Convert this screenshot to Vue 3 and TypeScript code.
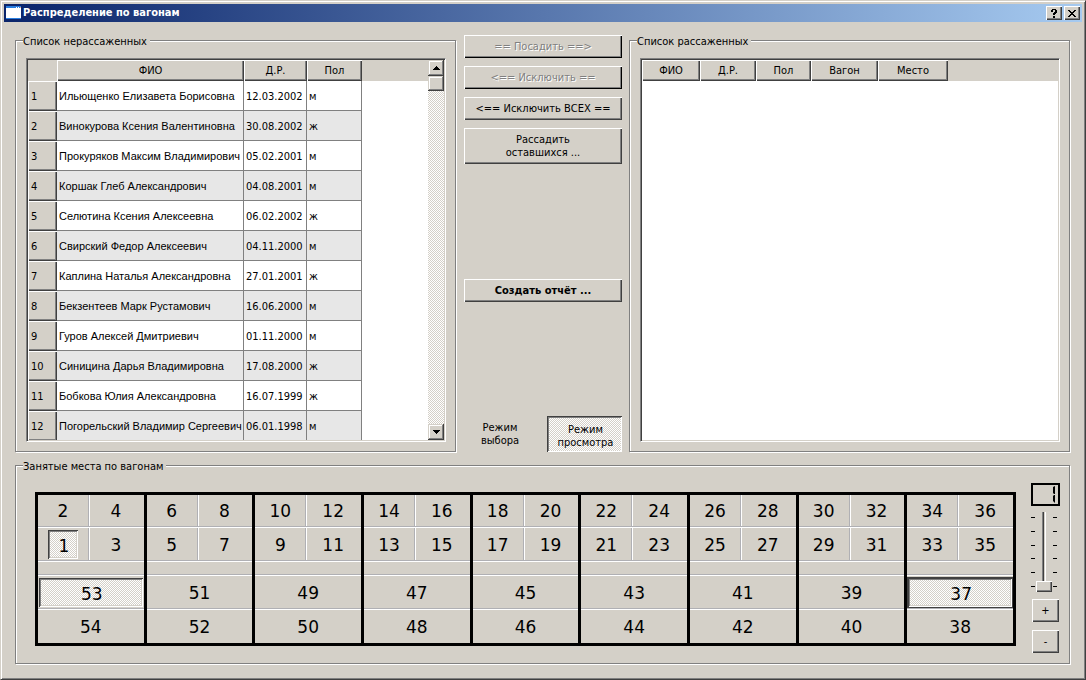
<script setup lang="ts">
import { ref, computed } from 'vue'

interface Passenger {
  name: string
  born: string
  sex: string
}

const passengers: Passenger[] = [
  { name: 'Ильющенко Елизавета Борисовна', born: '12.03.2002', sex: 'м' },
  { name: 'Винокурова Ксения Валентиновна', born: '30.08.2002', sex: 'ж' },
  { name: 'Прокуряков Максим Владимирович', born: '05.02.2001', sex: 'м' },
  { name: 'Коршак Глеб Александрович', born: '04.08.2001', sex: 'м' },
  { name: 'Селютина Ксения Алексеевна', born: '06.02.2002', sex: 'ж' },
  { name: 'Свирский Федор Алексеевич', born: '04.11.2000', sex: 'м' },
  { name: 'Каплина Наталья Александровна', born: '27.01.2001', sex: 'ж' },
  { name: 'Бекзентеев Марк Рустамович', born: '16.06.2000', sex: 'м' },
  { name: 'Гуров Алексей Дмитриевич', born: '01.11.2000', sex: 'м' },
  { name: 'Синицина Дарья Владимировна', born: '17.08.2000', sex: 'ж' },
  { name: 'Бобкова Юлия Александровна', born: '16.07.1999', sex: 'ж' },
  { name: 'Погорельский Владимир Сергеевич', born: '06.01.1998', sex: 'м' },
]

const mode = ref<'select' | 'view'>('view')
const car = ref(1)
const taken = new Set([1, 53])
const current = ref(37)

const compartments = computed(() =>
  Array.from({ length: 9 }, (_, i) => ({
    upper: [4 * i + 2, 4 * i + 4],
    lower: [4 * i + 1, 4 * i + 3],
    side: [53 - 2 * i, 54 - 2 * i],
  })),
)

const ticks = [5, 19, 33, 46, 60, 74]

const seatClass = (n: number) => ({ down: taken.has(n), current: n === current.value })
</script>

<template>
  <div class="window">
    <header class="titlebar">
      <svg class="app-icon" width="16" height="14" viewBox="0 0 16 14" aria-hidden="true" shape-rendering="crispEdges">
        <rect width="15" height="13" fill="#2a7fe0" />
        <rect x="10" y="1" width="1" height="1" fill="#fff" />
        <rect x="12" y="1" width="1" height="1" fill="#fff" />
        <rect x="14" y="1" width="1" height="1" fill="#f0a080" />
        <rect y="2" width="15" height="10" fill="#fff" />
      </svg>
      <h1>Распределение по вагонам</h1>
      <button class="caption" aria-label="Справка">
        <svg width="8" height="9" viewBox="0 0 8 9" shape-rendering="crispEdges">
          <path d="M2 0h4v1h1v3h-1v1h-1v1h-2v-2h1v-1h1v-2h-2v2h-2v-2h1zM3 7h2v2h-2z" />
        </svg>
      </button>
      <button class="caption" aria-label="Закрыть">
        <svg width="8" height="7" viewBox="0 0 8 7" shape-rendering="crispEdges">
          <path d="M0 0h2v1h1v1h2v-1h1v-1h2v1h-1v1h-1v1h-1v1h1v1h1v1h1v1h-2v-1h-1v-1h-2v1h-1v1h-2v-1h1v-1h1v-1h1v-1h-1v-1h-1v-1h-1z" />
        </svg>
      </button>
    </header>

    <main>
      <div class="top">
        <fieldset class="group">
          <legend>Список нерассаженных</legend>
          <div class="sunken">
            <div class="viewport">
              <table class="people">
                <colgroup>
                  <col class="c-num" /><col class="c-name" /><col class="c-date" /><col class="c-sex" /><col />
                </colgroup>
                <thead>
                  <tr>
                    <td class="blank"></td>
                    <th scope="col">ФИО</th>
                    <th scope="col">Д.Р.</th>
                    <th scope="col">Пол</th>
                    <td class="blank"></td>
                  </tr>
                </thead>
                <tbody>
                  <tr v-for="(p, i) in passengers" :key="p.name">
                    <th scope="row">{{ i + 1 }}</th>
                    <td class="name">{{ p.name }}</td>
                    <td>{{ p.born }}</td>
                    <td>{{ p.sex }}</td>
                    <td class="rest"></td>
                  </tr>
                </tbody>
              </table>
            </div>
            <div class="scrollbar">
              <button aria-label="Вверх">
                <svg width="7" height="4" viewBox="0 0 7 4" shape-rendering="crispEdges"><path d="M3 0h1v1h1v1h1v1h1v1h-7v-1h1v-1h1v-1h1z" /></svg>
              </button>
              <div class="thumb"></div>
              <button class="last" aria-label="Вниз">
                <svg width="7" height="4" viewBox="0 0 7 4" shape-rendering="crispEdges"><path d="M0 0h7v1h-1v1h-1v1h-1v1h-1v-1h-1v-1h-1v-1h-1z" /></svg>
              </button>
            </div>
          </div>
        </fieldset>

        <div class="actions">
          <button class="push framed" disabled>== Посадить ==&gt;</button>
          <button class="push framed" disabled>&lt;== Исключить ==</button>
          <button class="push">&lt;== Исключить ВСЕХ ==</button>
          <button class="push">Рассадить<br />оставшихся ...</button>
          <button class="push report">Создать отчёт ...</button>
          <div class="modes">
            <button :class="{ on: mode === 'select' }" :aria-pressed="mode === 'select'" @click="mode = 'select'">Режим<br />выбора</button>
            <button :class="{ on: mode === 'view' }" :aria-pressed="mode === 'view'" @click="mode = 'view'">Режим<br />просмотра</button>
          </div>
        </div>

        <fieldset class="group">
          <legend>Список рассаженных</legend>
          <div class="sunken">
            <div class="viewport">
              <table class="seated">
                <colgroup>
                  <col class="s-name" /><col class="s-date" /><col class="s-sex" /><col class="s-car" /><col class="s-seat" /><col />
                </colgroup>
                <thead>
                  <tr>
                    <th scope="col">ФИО</th>
                    <th scope="col">Д.Р.</th>
                    <th scope="col">Пол</th>
                    <th scope="col">Вагон</th>
                    <th scope="col">Место</th>
                    <td class="blank"></td>
                  </tr>
                </thead>
              </table>
            </div>
          </div>
        </fieldset>
      </div>

      <fieldset class="group plan">
        <legend>Занятые места по вагонам</legend>
        <div class="plan-body">
          <div class="carriage">
            <div v-for="c in compartments" :key="c.side[0]" class="compartment">
              <div class="pair first">
                <button v-for="n in c.upper" :key="n" :class="seatClass(n)" @click="current = n">{{ n }}</button>
              </div>
              <div class="pair">
                <button v-for="n in c.lower" :key="n" :class="seatClass(n)" @click="current = n">{{ n }}</button>
              </div>
              <div class="aisle"></div>
              <div v-for="n in c.side" :key="n" class="side">
                <button :class="seatClass(n)" @click="current = n">{{ n }}</button>
              </div>
            </div>
          </div>
          <div class="picker">
            <output class="lcd" :aria-label="String(car)">
              <svg width="25" height="19" viewBox="0 0 25 19" aria-hidden="true">
                <path d="M22 1v8h-1l-1 -1v-6zM22 10v8l-2 -2v-5l1 -1z" />
              </svg>
            </output>
            <div class="slider">
              <svg width="26" height="80" viewBox="0 0 26 80" aria-hidden="true" shape-rendering="crispEdges">
                <path v-for="t in ticks" :key="t" :d="`M0 ${t}h4v1h-4zM22 ${t}h4v1h-4z`" />
              </svg>
              <input v-model.number="car" type="range" min="1" max="6" aria-label="Вагон" />
            </div>
            <button class="push step" @click="car = Math.min(6, car + 1)">+</button>
            <button class="push step" @click="car = Math.max(1, car - 1)">-</button>
          </div>
        </div>
      </fieldset>
    </main>
  </div>
</template>

<style>
body {
  margin: 0;
  background: #d4d0c8;
}
</style>

<style scoped>
* {
  box-sizing: border-box;
}
.window {
  --face: #d4d0c8;
  --shade: #808080;
  --dark: #404040;
  --dither: repeating-conic-gradient(#fff 0 25%, #d4d0c8 0 50%) 0 0 / 2px 2px;
  min-height: 100vh;
  display: flex;
  flex-direction: column;
  padding: 3px;
  background: var(--face);
  border: 1px solid;
  border-color: var(--face) var(--dark) var(--dark) var(--face);
  box-shadow: inset 1px 1px #fff, inset -1px -1px var(--shade);
  color: #000;
  font: 11px/13px "DejaVu Sans Condensed", "DejaVu Sans", sans-serif;
}
button {
  font: inherit;
  color: inherit;
  padding: 0;
  margin: 0;
  border: 0;
  border-radius: 0;
  background: none;
}
.titlebar {
  height: 18px;
  display: flex;
  align-items: center;
  padding: 0 2px;
  background: linear-gradient(90deg, #0a246a, #a6caf0);
}
.titlebar h1 {
  flex: 1;
  margin: 0 0 0 1px;
  color: #fff;
  font-size: 11px;
  line-height: 18px;
  font-weight: bold;
}
.caption {
  width: 16px;
  height: 14px;
  display: flex;
  align-items: center;
  justify-content: center;
  background: var(--face);
  box-shadow: inset 1px 1px #fff, inset -1px -1px var(--dark), inset -2px -2px var(--shade);
}
.caption + .caption {
  margin-left: 2px;
}
main {
  flex: 1;
  display: flex;
  flex-direction: column;
  gap: 7px;
  padding: 13px 11px 11px;
}
.top {
  flex: 1 0 417px;
  display: flex;
  gap: 7px;
}
.group {
  position: relative;
  flex: 1 1 0;
  min-width: 0;
  margin: 0;
  display: flex;
  flex-direction: column;
  border: 0;
  padding: 23px 11px 11px;
}
.group::before {
  content: "";
  position: absolute;
  inset: 5px 1px 1px 0;
  border: 1px solid var(--shade);
  box-shadow: 1px 1px #fff, inset 1px 1px #fff;
  pointer-events: none;
}
.group legend {
  position: absolute;
  top: 0;
  left: 8px;
  padding: 0 3px 0 0;
  background: var(--face);
}
.sunken {
  flex: 1 1 0;
  min-height: 0;
  display: flex;
  overflow: hidden;
  background: #fff;
  border: 1px solid;
  border-color: var(--shade) #fff #fff var(--shade);
  box-shadow: inset 1px 1px var(--dark), inset -1px -1px var(--face);
  padding: 1px;
}
.viewport {
  flex: 1;
  min-width: 0;
  overflow: hidden;
}
table {
  width: 100%;
  table-layout: fixed;
  border-collapse: separate;
  border-spacing: 0;
}
.c-num { width: 29px; }
.c-name { width: 187px; }
.c-date { width: 63px; }
.c-sex { width: 55px; }
.s-name { width: 58px; }
.s-date { width: 56px; }
.s-sex { width: 55px; }
.s-car { width: 67px; }
.s-seat { width: 70px; }
th {
  padding: 0;
  font-weight: normal;
  background: var(--face);
  box-shadow: inset 1px 1px #fff, inset -1px -1px var(--dark), inset -2px -2px var(--shade);
}
thead th,
.blank {
  height: 21px;
  padding: 0;
}
.blank {
  background: var(--face);
}
tbody th {
  text-align: left;
  padding-left: 3px;
}
tbody th,
tbody td {
  height: 30px;
}
tbody td {
  padding: 2px 0 0 2px;
  white-space: nowrap;
  border-right: 1px solid var(--shade);
  border-bottom: 1px solid var(--shade);
}
td.name {
  font-family: "Liberation Sans", Arial, sans-serif;
}
tbody tr:nth-child(even) td {
  background: #e7e7e7;
}
tbody tr td.rest {
  border: 0;
  background: #fff;
}
.scrollbar {
  width: 16px;
  display: flex;
  flex-direction: column;
  background: var(--dither);
}
.scrollbar button,
.thumb {
  height: 16px;
  flex: none;
  display: flex;
  align-items: center;
  justify-content: center;
  background: var(--face);
  box-shadow: inset -1px -1px var(--dark), inset 1px 1px var(--face), inset -2px -2px var(--shade), inset 2px 2px #fff;
}
.thumb {
  height: 15px;
}
.scrollbar .last {
  margin-top: auto;
}
.actions {
  width: 158px;
  flex: none;
  display: flex;
  flex-direction: column;
  gap: 8px;
  padding-bottom: 1px;
}
.push {
  min-height: 23px;
  padding: 5px 0;
  background: var(--face);
  box-shadow: inset 1px 1px #fff, inset -1px -1px var(--dark), inset -2px -2px var(--shade);
}
.push.framed {
  box-shadow: inset 1px 1px #fff, inset -1px -1px #000, inset -2px -2px var(--shade);
}
.push:disabled {
  color: var(--shade);
  text-shadow: 1px 1px #fff;
}
.actions .report {
  margin-top: 107px;
  font-weight: bold;
}
.modes {
  margin-top: auto;
  display: grid;
  grid-template-columns: 72px 75px;
  justify-content: space-between;
}
.modes button {
  height: 36px;
}
.modes .on {
  padding: 3px 0 0 2px;
  background: var(--dither);
  box-shadow: inset 1px 1px var(--dark), inset -1px -1px #fff, inset 2px 2px var(--shade);
}
.plan {
  flex: none;
  padding: 23px 11px 12px 20px;
}
.plan-body {
  display: flex;
  gap: 15px;
}
.carriage {
  flex: 1;
  align-self: flex-start;
  margin-top: 9px;
  display: grid;
  grid-template-columns: repeat(9, 1fr);
  gap: 3px;
  padding: 3px;
  background: #000;
  font-family: "DejaVu Sans", sans-serif;
  font-size: 17px;
  line-height: 22px;
}
.compartment {
  background: var(--face);
  min-width: 0;
}
.pair,
.aisle,
.side {
  height: 34px;
  display: grid;
  border-bottom: 1px solid #fff;
  box-shadow: inset 0 -1px #b0b0b4;
}
.pair {
  grid-template-columns: 52px 1fr;
  background: linear-gradient(90deg, transparent 50px, #b0b0b4 50px 51px, #fff 51px 52px, transparent 52px);
}
.pair button {
  padding-right: 2px;
}
.pair.first {
  height: 33px;
}
.aisle {
  height: 14px;
}
.side {
  padding: 2px 1px;
}
.side:last-child {
  height: 33px;
  padding-bottom: 1px;
  border: 0;
  box-shadow: none;
}
.pair button.down {
  width: 30px;
  height: 29px;
  margin: 2px 0 0 10px;
  padding-right: 0;
}
.down,
.current {
  padding: 3px 0 0 2px;
  background: var(--dither);
  box-shadow: inset 1px 1px var(--dark), inset -1px -1px #fff, inset 2px 2px var(--shade), inset -2px -2px var(--face);
}
.side .current {
  margin: -1px;
  border: 1px solid var(--dark);
}
.picker {
  width: 29px;
  display: flex;
  flex-direction: column;
  align-items: center;
}
.lcd {
  width: 29px;
  height: 23px;
  margin-bottom: 1px;
  border: 2px solid #000;
}
.lcd svg {
  display: block;
}
.slider {
  width: 29px;
  height: 85px;
  position: relative;
  margin-bottom: 7px;
  padding-top: 5px;
}
.slider svg {
  display: block;
}
.slider input {
  position: absolute;
  top: 5px;
  left: 5px;
  width: 16px;
  height: 80px;
  margin: 0;
  appearance: none;
  writing-mode: vertical-lr;
  direction: rtl;
  background: linear-gradient(90deg, transparent 6px, #808080 6px 7px, #404040 7px 8px, #d4d0c8 8px 9px, #fff 9px 10px, transparent 10px) 0 0 / 16px 75px no-repeat;
}
.slider input::-webkit-slider-thumb {
  appearance: none;
  width: 16px;
  height: 11px;
  background: #d4d0c8;
  box-shadow: inset 1px 1px #fff, inset -1px -1px #404040, inset -2px -2px #808080;
}
.step {
  width: 27px;
  height: 23px;
}
.step + .step {
  margin-top: 8px;
}
</style>
